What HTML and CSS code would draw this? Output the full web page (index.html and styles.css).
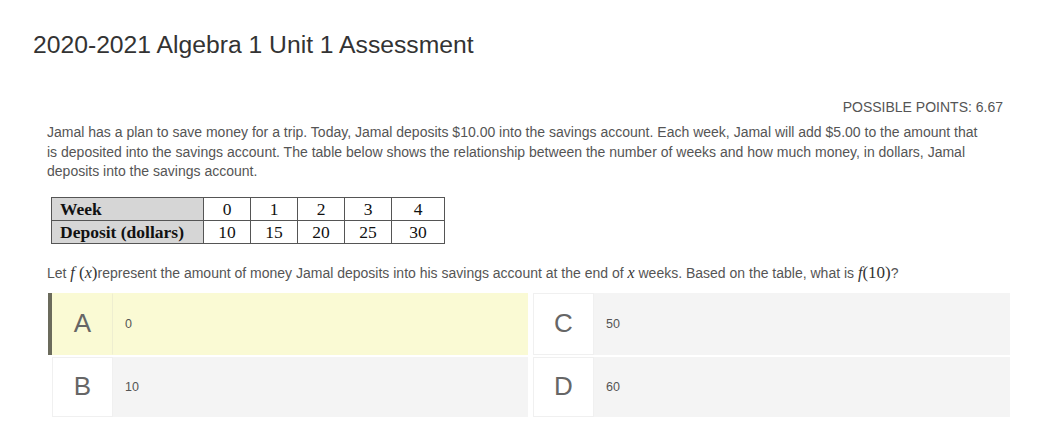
FILE: index.html
```html
<!DOCTYPE html>
<html>
<head>
<meta charset="utf-8">
<link rel="stylesheet" href="styles.css">
</head>
<body>
<div class="page">
  <h1 class="title">2020-2021 Algebra 1 Unit 1 Assessment</h1>
  <div class="points">POSSIBLE POINTS: 6.67</div>
  <p class="prompt">Jamal has a plan to save money for a trip. Today, Jamal deposits $10.00 into the savings account. Each week, Jamal will add $5.00 to the amount that is deposited into the savings account. The table below shows the relationship between the number of weeks and how much money, in dollars, Jamal deposits into the savings account.</p>
  <table class="data">
    <tr><th>Week</th><td>0</td><td>1</td><td>2</td><td>3</td><td>4</td></tr>
    <tr><th>Deposit (dollars)</th><td>10</td><td>15</td><td>20</td><td>25</td><td>30</td></tr>
  </table>
  <p class="question">Let <span class="math"><i>f</i> (<i>x</i>)</span>represent the amount of money Jamal deposits into his savings account at the end of <span class="math"><i>x</i></span> weeks. Based on the table, what is <span class="math"><i>f</i>(10)</span>?</p>
  <div class="options">
    <div class="option selected"><div class="letter">A</div><div class="answer">0</div></div>
    <div class="option"><div class="letter">C</div><div class="answer">50</div></div>
    <div class="option"><div class="letter">B</div><div class="answer">10</div></div>
    <div class="option"><div class="letter">D</div><div class="answer">60</div></div>
  </div>
</div>
</body>
</html>
```
FILE: styles.css
```css
* { box-sizing: border-box; }
html, body { margin: 0; padding: 0; background: #fff; }
body { font-family: "Liberation Sans", Arial, sans-serif; color: #555; }
.page { width: 1060px; height: 441px; overflow: hidden; }
.title {
  margin: 30px 0 0 33px;
  font-size: 24.7px;
  line-height: 30px;
  font-weight: normal;
  color: #333;
}
.points {
  margin: 39px 0 0 0;
  width: 1003px;
  text-align: right;
  font-size: 14px;
  line-height: 17px;
  color: #555;
}
.prompt {
  margin: 7px 0 0 47px;
  width: 940px;
  font-size: 14.03px;
  line-height: 19.5px;
  color: #555;
}
.data {
  margin: 15px 0 0 51px;
  border-collapse: collapse;
  font-family: "Liberation Serif", "Times New Roman", serif;
  font-size: 17.5px;
  color: #111;
}
.data th, .data td {
  border: 1px solid #555;
  height: 23px;
  padding: 0;
  line-height: 20px;
}
.data th {
  width: 152px;
  background: #d6d6d6;
  text-align: left;
  padding-left: 8px;
  font-weight: bold;
}
.data td { text-align: center; width: 47px; }
.data td:last-child { width: 53px; }
.question {
  margin: 18px 0 0 47px;
  font-size: 14px;
  line-height: 22px;
  color: #555;
}
.math {
  font-family: "Liberation Serif", "Times New Roman", serif;
  font-size: 17px;
  color: #333;
}
.math i { font-size: 16px; }
.options {
  margin: 9px 0 0 48px;
  display: grid;
  grid-template-columns: 480px 481px;
  grid-template-rows: 62px 60px;
  column-gap: 1px;
  row-gap: 2px;
}
.option {
  display: flex;
  border-left: 4px solid transparent;
}
.letter {
  width: 61px;
  background: #fff;
  border: 1px solid #f0f0f0;
  display: flex;
  align-items: center;
  justify-content: center;
  font-size: 26px;
  color: #666;
}
.answer {
  flex: 1;
  background: #f4f4f4;
  display: flex;
  align-items: center;
  padding-left: 12px;
  font-size: 12.5px;
  color: #555;
}
.option.selected { border-left-color: #6b6b5c; }
.option.selected .letter { background: #fafad4; border-color: #fafad4; border-right-color: #eeeed0; }
.option.selected .answer { background: #fafad4; }
```
